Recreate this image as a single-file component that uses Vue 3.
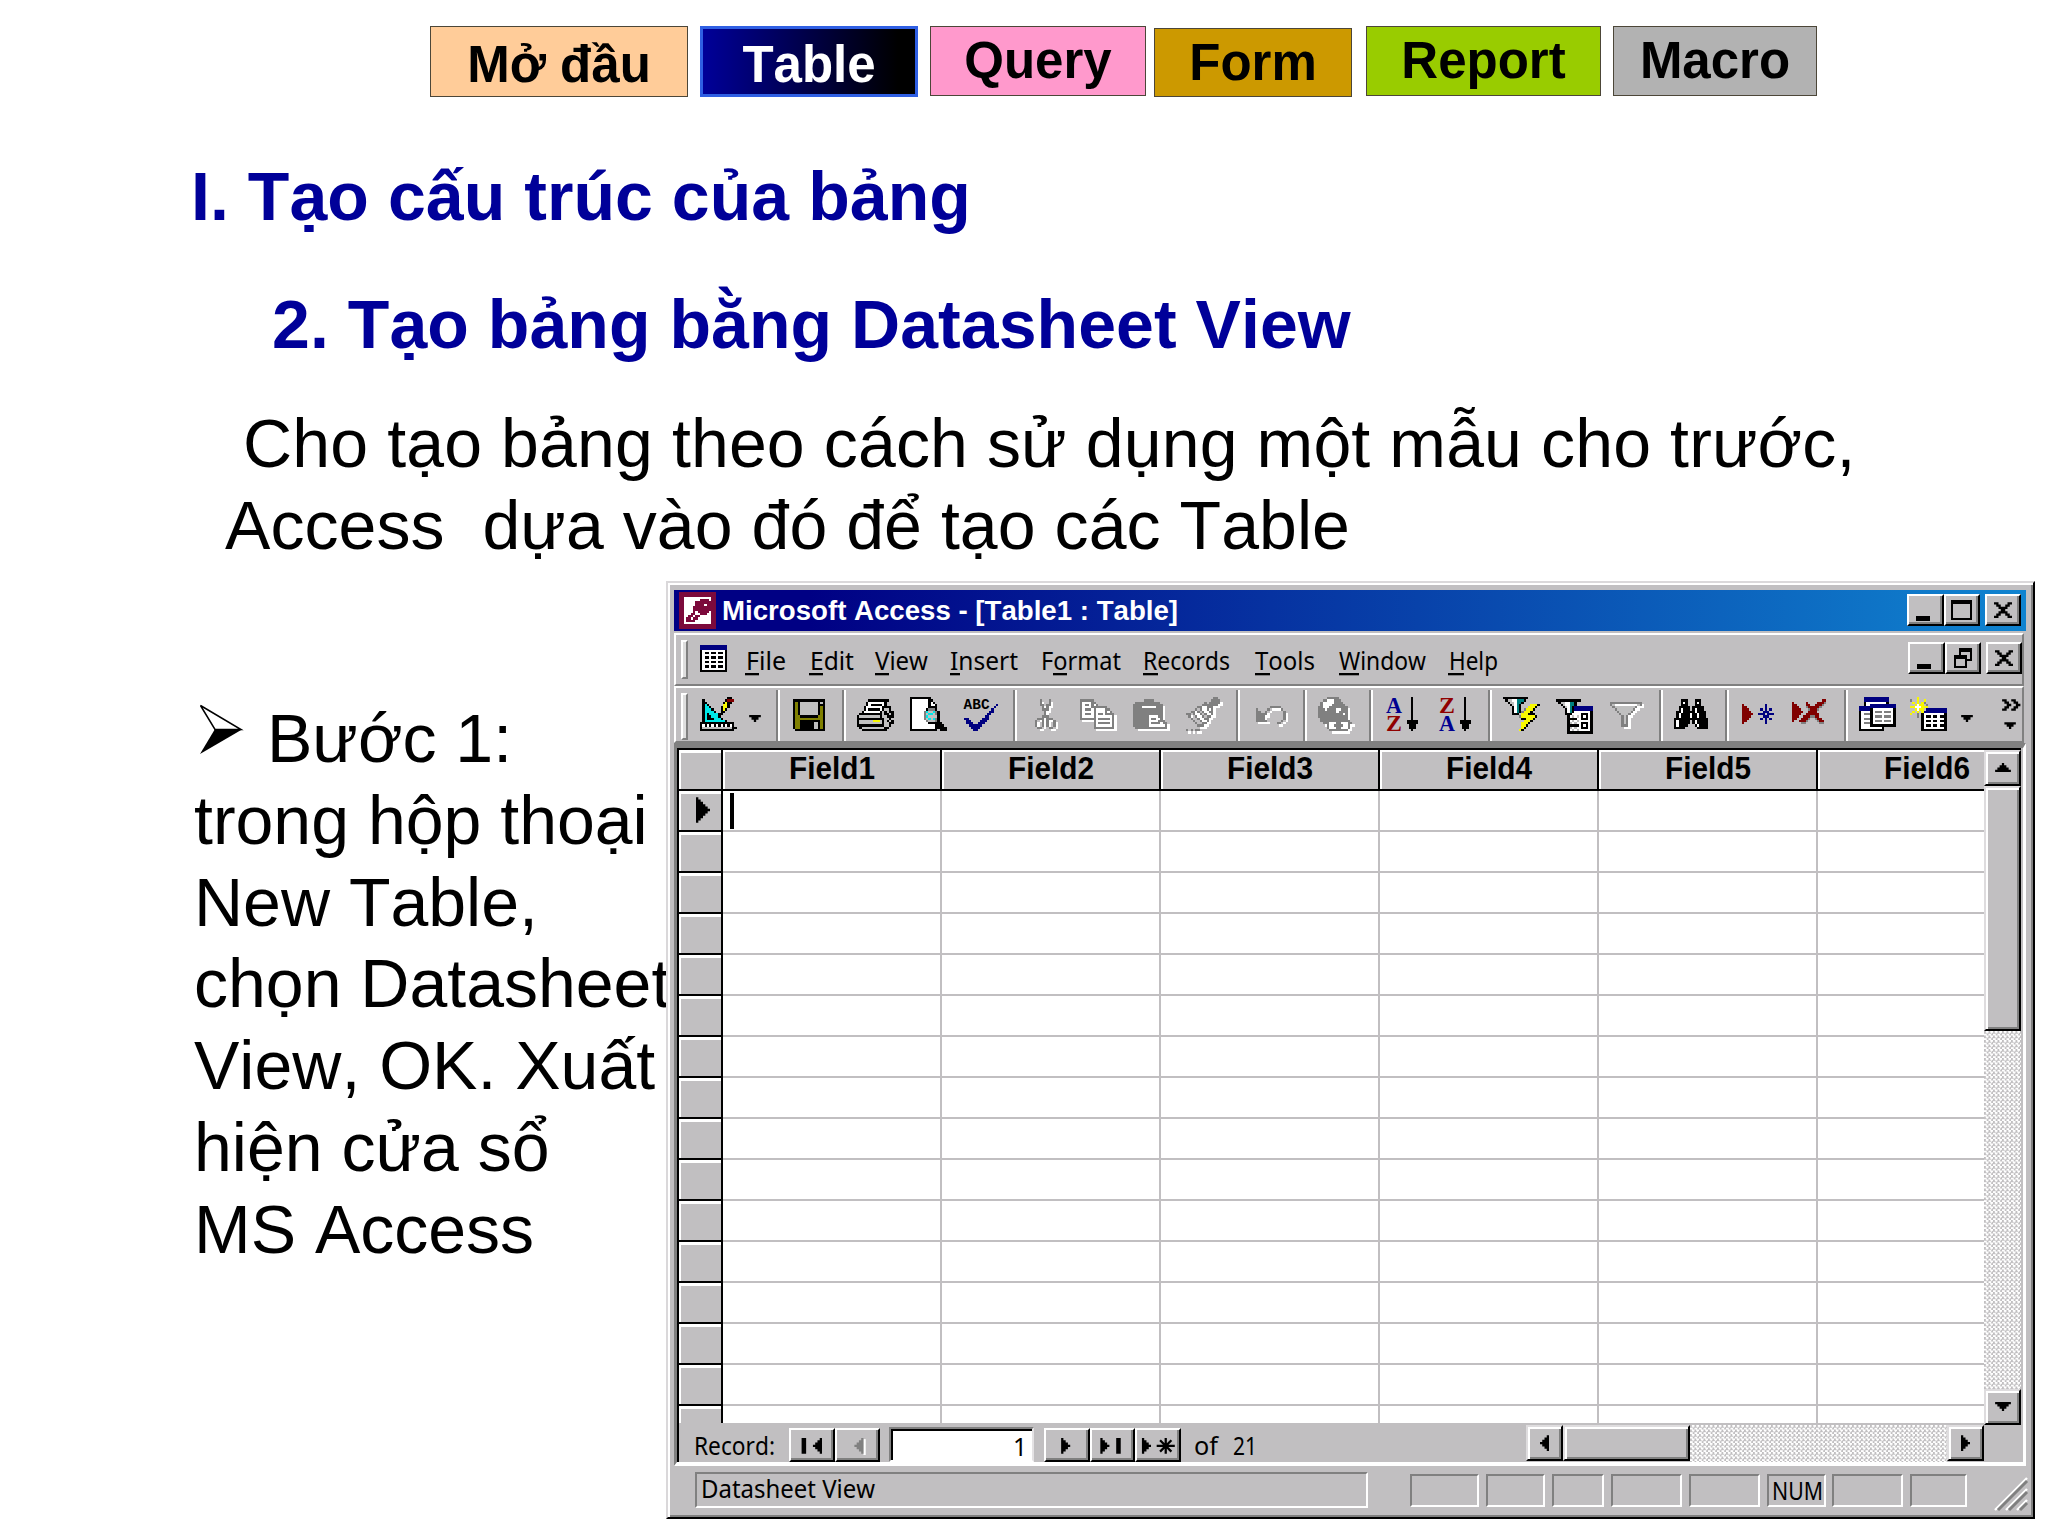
<template>
  <div class="slide">
    <nav class="tabs">
      <div v-for="tab in tabs" :key="tab.name" class="tab" :class="tab.name">{{ tab.label }}</div>
    </nav>

    <h1 class="chapter">I. Tạo cấu trúc của bảng</h1>
    <h2 class="section">2. Tạo bảng bằng Datasheet View</h2>
    <p class="intro">
      <span class="first">Cho tạo bảng theo cách sử dụng một mẫu cho trước,</span>
      <span>Access&nbsp; dựa vào đó để tạo các Table</span>
    </p>

    <div class="content">
      <div class="steps">
        <div class="step-head">
          <svg class="bullet" width="73" height="82" viewBox="0 0 73 82">
            <path d="M6.5 7.5 L47 31.5 L21 31.5 Z" fill="#fff" stroke="#000" stroke-width="1.5" />
            <path d="M6 56 L21 31 L48 31.5 Z" fill="#000" />
          </svg>
          <span>Bước 1:</span>
        </div>
        <div v-for="line in stepLines" :key="line">{{ line }}</div>
      </div>

      <div class="window">
        <!-- 标题栏 -->
        <div class="title-bar">
          <svg class="app-icon" viewBox="0 0 16 16">
            <rect v-for="(p, i) in pixels('key')" :key="i" :x="p.x" :y="p.y" :width="p.w" height="1" :fill="p.fill" />
          </svg>
          <svg class="title-text" width="470" height="41">
            <text x="0" y="29.5" textLength="456" lengthAdjust="spacingAndGlyphs">Microsoft Access - [Table1 : Table]</text>
          </svg>
          <div class="win-buttons">
            <div class="btn"><i class="min"></i></div>
            <div class="btn"><i class="max"></i></div>
            <div class="btn close">
              <svg viewBox="0 0 8 7"><path d="M0 0h2v1h1v1h2v-1h1v-1h2v1h-1v1h-1v1h-1v1h1v1h1v1h1v1h-2v-1h-1v-1h-2v1h-1v1h-2v-1h1v-1h1v-1h1v-1h-1v-1h-1v-1h-1z" /></svg>
            </div>
          </div>
        </div>

        <!-- 菜单栏 -->
        <div class="bar menu-bar">
          <div class="grip"></div>
          <svg class="doc-icon" viewBox="0 0 12 12">
            <rect width="12" height="12" fill="#000" />
            <rect width="12" height="2" fill="#000080" />
            <rect x="1" y="2" width="10" height="9" fill="#fff" />
            <path d="M2 3.5h8M2 5.5h8M2 7.5h8M2 9.5h8" stroke="#000" stroke-dasharray="2 1" />
          </svg>
          <div v-for="m in menus" :key="m.label" class="menu" :style="{ width: m.slot + 'px' }">
            <svg :width="m.len + 4" height="41">
              <text x="0" y="25" :textLength="m.len" lengthAdjust="spacingAndGlyphs">{{ m.label }}</text>
              <rect :x="m.ux" y="28" :width="m.uw" height="2.3" />
            </svg>
          </div>
          <div class="win-buttons">
            <div class="btn"><i class="min"></i></div>
            <div class="btn">
              <svg class="restore" viewBox="0 0 8 9" shape-rendering="crispEdges">
                <path d="M2 0h6v6h-2v3h-6v-6h2z" fill="#000" />
                <path d="M3 2h4v3h-1v-2h-3zM1 5h4v3h-4z" fill="#c1bfc1" />
              </svg>
            </div>
            <div class="btn close">
              <svg viewBox="0 0 8 7"><path d="M0 0h2v1h1v1h2v-1h1v-1h2v1h-1v1h-1v1h-1v1h1v1h1v1h1v1h-2v-1h-1v-1h-2v1h-1v1h-2v-1h1v-1h1v-1h1v-1h-1v-1h-1v-1h-1z" /></svg>
            </div>
          </div>
        </div>

        <!-- 工具栏 -->
        <div class="bar tool-bar">
          <div class="grip"></div>
          <div v-for="(t, n) in tools" :key="n" class="tool" :style="{ width: t.slot + 'px' }">
            <div v-if="t.icon === 'sep'" class="sep"></div>
            <svg v-else-if="t.icon === 'arrow'" class="drop" viewBox="0 0 5 3"><path d="M0 0h5v1h-1v1h-1v1h-1v-1h-1v-1h-1z" /></svg>
            <svg v-else class="icon" viewBox="0 0 16 16">
              <template v-if="t.disabled">
                <rect v-for="(p, i) in pixels(t.icon)" :key="'s' + i" :x="p.x + 1" :y="p.y + 1" :width="p.w" height="1" fill="#fff" />
              </template>
              <rect v-for="(p, i) in pixels(t.icon)" :key="i" :x="p.x" :y="p.y" :width="p.w" height="1" :fill="p.fill" />
              <text v-if="t.icon === 'spell'" class="abc" x="-0.2" y="5.3" textLength="11.4" lengthAdjust="spacingAndGlyphs">ABC</text>
              <template v-if="t.letters">
                <text class="sort" :class="'letter-' + t.letters[0]" x="0" y="6.9" textLength="7" lengthAdjust="spacingAndGlyphs">{{ t.letters[0] }}</text>
                <text class="sort" :class="'letter-' + t.letters[1]" x="0" y="15" textLength="7" lengthAdjust="spacingAndGlyphs">{{ t.letters[1] }}</text>
              </template>
            </svg>
          </div>
          <svg class="more" viewBox="0 0 8 14">
            <path d="M0 1h2v1h1v1h1v1h-1v1h-1v1h-2v-1h1v-1h1v-1h-1v-1h-1zM4 1h2v1h1v1h1v1h-1v1h-1v1h-2v-1h1v-1h1v-1h-1v-1h-1z" />
            <path d="M1 11h5v1h-1v1h-1v1h-1v-1h-1v-1h-1z" />
          </svg>
        </div>

        <!-- 数据表 -->
        <div class="frame">
          <div class="upper">
            <div class="sheet">
              <div class="row head">
                <div class="selector"></div>
                <div v-for="c in 6" :key="c" class="col-head">
                  <svg width="90" height="37">
                    <text x="2" y="28.5" textLength="86" lengthAdjust="spacingAndGlyphs">Field{{ c }}</text>
                  </svg>
                </div>
              </div>
              <div v-for="r in 16" :key="r" class="row">
                <div class="selector">
                  <svg v-if="r === 1" class="current" viewBox="0 0 6 11"><path d="M0 0h1v1h1v1h1v1h1v1h1v1h1v1h-1v1h-1v1h-1v1h-1v1h-1v1h-1z" /></svg>
                </div>
                <div v-for="c in 6" :key="c" class="cell">
                  <i v-if="r === 1 && c === 1" class="caret"></i>
                </div>
              </div>
            </div>
            <div class="vscroll">
              <div class="sbtn"><svg width="16" height="9" viewBox="0 0 7 4"><path d="M3 0h1v1h1v1h1v1h1v1h-7v-1h1v-1h1v-1h1z" /></svg></div>
              <div class="sbtn vthumb"></div>
              <div class="dither"></div>
              <div class="sbtn"><svg width="16" height="9" viewBox="0 0 7 4"><path d="M0 0h7v1h-1v1h-1v1h-1v1h-1v-1h-1v-1h-1v-1h-1z" /></svg></div>
            </div>
          </div>

          <div class="record-bar">
            <svg class="rec-label" width="95" height="38">
              <text x="0" y="32" textLength="81" lengthAdjust="spacingAndGlyphs">Record:</text>
            </svg>
            <div class="nav-btn"><svg viewBox="0 0 20 15"><path d="M1 0h2v7h-2zM10 0v7h-1v-1h-1v-1h-1v-1h-1v-1h1v-1h1v-1h1v-1z" /></svg></div>
            <div class="nav-btn"><svg viewBox="0 0 20 15"><path d="M8 0.5h1v7h-1z" fill="#fff" /><path d="M8 0v7h-1v-1h-1v-1h-1v-1h-1v-1h1v-1h1v-1h1v-1z" fill="#808080" /></svg></div>
            <div class="rec-input">1</div>
            <div class="nav-btn"><svg viewBox="0 0 20 15"><path d="M3 0h1v1h1v1h1v1h1v1h-1v1h-1v1h-1v1h-1z" /></svg></div>
            <div class="nav-btn"><svg viewBox="0 0 20 15"><path d="M0 0h1v1h1v1h1v1h1v1h-1v1h-1v1h-1v1h-1zM7 0h2v7h-2z" /></svg></div>
            <div class="nav-btn"><svg viewBox="0 0 20 15"><path d="M-1.5 0h1v1h1v1h1v1h1v1h-1v1h-1v1h-1v1h-1z" /><path d="M5 3.5h8M9 0v7M6.5 1l5 5M11.5 1l-5 5" stroke="#000" /></svg></div>
            <svg class="rec-total" width="80" height="38">
              <text x="0" y="32" textLength="24" lengthAdjust="spacingAndGlyphs">of</text>
              <text x="39" y="32" textLength="24" lengthAdjust="spacingAndGlyphs">21</text>
            </svg>
            <div class="hscroll">
              <div class="sbtn"><svg width="9" height="16" viewBox="0 0 4 7"><path d="M4 0v7h-1v-1h-1v-1h-1v-1h-1v-1h1v-1h1v-1h1v-1z" /></svg></div>
              <div class="sbtn hthumb"></div>
              <div class="dither"></div>
              <div class="sbtn"><svg width="9" height="16" viewBox="0 0 4 7"><path d="M0 0h1v1h1v1h1v1h1v1h-1v1h-1v1h-1v1h-1z" /></svg></div>
            </div>
          </div>
        </div>

        <!-- 状态栏 -->
        <div class="status-bar">
          <div class="pane main-pane">
            <svg width="190" height="33">
              <text x="4" y="24" textLength="174" lengthAdjust="spacingAndGlyphs">Datasheet View</text>
            </svg>
          </div>
          <div class="panes">
            <div v-for="(p, i) in panes" :key="i" class="pane" :style="{ width: p.w + 'px', marginRight: p.gap + 'px' }">
              <svg v-if="p.text" width="58" height="30">
                <text x="3" y="24" textLength="51" lengthAdjust="spacingAndGlyphs">{{ p.text }}</text>
              </svg>
            </div>
          </div>
          <svg class="size-grip" width="34" height="34" viewBox="0 0 34 34">
            <path d="M1 33L33 1M12 33L33 12M23 33L33 23" stroke="#fff" stroke-width="2.4" />
            <path d="M4 33L33 4M15 33L33 15M26 33L33 26" stroke="#808080" stroke-width="3" />
          </svg>
        </div>
      </div>
    </div>
  </div>
</template>

<script setup>
const tabs = [
  { name: "start", label: "Mở đầu" },
  { name: "table", label: "Table" },
  { name: "query", label: "Query" },
  { name: "form", label: "Form" },
  { name: "report", label: "Report" },
  { name: "macro", label: "Macro" },
];

const stepLines = ["trong hộp thoại", "New Table,", "chọn Datasheet", "View, OK. Xuất", "hiện cửa sổ", "MS Access"];

// slot: 占位宽度, len: 文字宽度, ux/uw: 快捷键下划线
const menus = [
  { label: "File", slot: 64, len: 40, ux: -1, uw: 14 },
  { label: "Edit", slot: 65, len: 44, ux: -1, uw: 14 },
  { label: "View", slot: 75, len: 53, ux: 0, uw: 14 },
  { label: "Insert", slot: 91, len: 68, ux: 0, uw: 10 },
  { label: "Format", slot: 102, len: 80, ux: 12, uw: 14 },
  { label: "Records", slot: 112, len: 87, ux: 0, uw: 15 },
  { label: "Tools", slot: 84, len: 60, ux: 0, uw: 15 },
  { label: "Window", slot: 110, len: 87, ux: 0, uw: 20 },
  { label: "Help", slot: 60, len: 49, ux: -1, uw: 16 },
];

const tools = [
  { icon: "design", slot: 49 },
  { icon: "arrow", slot: 27 },
  { icon: "sep", slot: 17 },
  { icon: "save", slot: 49 },
  { icon: "sep", slot: 15 },
  { icon: "print", slot: 53 },
  { icon: "preview", slot: 54 },
  { icon: "spell", slot: 49 },
  { icon: "sep", slot: 22 },
  { icon: "cut", slot: 45, disabled: true },
  { icon: "copy", slot: 53, disabled: true },
  { icon: "paste", slot: 53, disabled: true },
  { icon: "painter", slot: 50, disabled: true },
  { icon: "sep", slot: 20 },
  { icon: "undo", slot: 47, disabled: true },
  { icon: "sep", slot: 15 },
  { icon: "link", slot: 51, disabled: true },
  { icon: "sep", slot: 17 },
  { icon: "sort", slot: 53, letters: "AZ" },
  { icon: "sort", slot: 49, letters: "ZA" },
  { icon: "sep", slot: 15 },
  { icon: "filterSelection", slot: 53 },
  { icon: "filterForm", slot: 54 },
  { icon: "filter", slot: 49, disabled: true },
  { icon: "sep", slot: 15 },
  { icon: "find", slot: 51 },
  { icon: "sep", slot: 17 },
  { icon: "newRecord", slot: 50 },
  { icon: "deleteRecord", slot: 52 },
  { icon: "sep", slot: 15 },
  { icon: "database", slot: 51 },
  { icon: "newObject", slot: 51 },
  { icon: "arrow", slot: 41 },
];

const panes = [
  { w: 69, gap: 7 },
  { w: 59, gap: 7 },
  { w: 52, gap: 7 },
  { w: 71, gap: 7 },
  { w: 71, gap: 7 },
  { w: 59, gap: 6, text: "NUM" },
  { w: 71, gap: 7 },
  { w: 57, gap: 0 },
];

const palette = {
  k: "#000",
  w: "#fff",
  g: "#808080",
  s: "#c0c0c0",
  b: "#000080",
  c: "#00e8e8",
  y: "#f8f800",
  o: "#808000",
  r: "#800000",
  m: "#7c0a3c",
  t: "#008080",
};

// 16x16 像素图标
const icons = {
  key: [
    "mmmmmmmmmmmmmmmm",
    "mmmmmmmmmmmmmmmm",
    "mmwwwwwwwwwwwwmm",
    "mmwwwwwwwmmmmwmm",
    "mmwwwwwmmmmmmmmm",
    "mmwwwwwmmmmwmmmm",
    "mmwwwwmmmmmmmmmm",
    "mmwwwwmmmmmmmmmm",
    "mmwwwwmwmmmmmwmm",
    "mmwwwmmwwmmmwwmm",
    "mmwwmmwmmwwwwwmm",
    "mmwmmwmmwwwwwwmm",
    "mmwmmmmwwwwwwwmm",
    "mmwwwwwwwwwwwwmm",
    "mmmmmmmmmmmmmmmm",
    "mmmmmmmmmmmmmmmm",
  ],
  design: [
    "............kk..",
    ".k.........krrr.",
    ".kk.......kykk..",
    ".kck......yyk...",
    ".kcck....kyyk...",
    ".kccck...kyk....",
    ".kcccck..kk.....",
    ".kckcccckk......",
    ".kckkccck.......",
    ".kckkkccck......",
    ".kccccccccck....",
    "kkkkkkkkkkkkkkk.",
    "kwkwkwkwkwkwkwk.",
    "kssssssssssssskk",
    "kkkkkkkkkkkkkkk.",
  ],
  save: [
    "",
    "kkkkkkkkkkkkkk",
    "kokssssssssksk",
    "koksssssssskkk",
    "koksssssssskok",
    "koksssssssskok",
    "koksssssssskok",
    "koksssssssskok",
    "kookkkkkkkkook",
    "kooooooooooook",
    "kookkkkkkkkkok",
    "kookkkkkksskok",
    "kookkkkkksskok",
    "kookkkkkksskok",
    ".kkkkkkkkkkkkk",
  ],
  print: [
    "",
    ".....kkkkkkkkk..",
    "....kwwwwwwwk...",
    "....kwkkkkkwk...",
    "...kwwwwwwwkkkk.",
    "...kwkkkkkwkssk.",
    "..kwwwwwwwkskskk",
    ".kkkkkkkkkkskksk",
    "ksssssssssksskkk",
    "kkkkkkkkkkkkssk.",
    "kssssssyyysksksk",
    "kssssssssssksskk",
    "kkkkkkkkkkkkssk.",
    ".ksssssssssskk..",
    "..kkkkkkkkkkk...",
  ],
  preview: [
    "kkkkkkkkk.......",
    "kwwwwwwwkk......",
    "kwwwwwwwkwk.....",
    "kwwwwwwwkwwk....",
    "kwwwwwwwkkkk....",
    "kwwwwwwkgggk....",
    "kwwwwwgcsscgk...",
    "kwwwwwgsccsgk...",
    "kwwwwwgcssssk...",
    "kwwwwwgscscgk...",
    "kwwwwwwgsssgk...",
    "kwwwwwwwkkkkkk..",
    "kwwwwwwwwwwkkkk.",
    "kwwwwwwwwwwkkkkk",
    "kkkkkkkkkkkk.kkk",
  ],
  spell: [
    "",
    "",
    "",
    "..............b.",
    ".............b..",
    "............b...",
    "...........bb...",
    "..........bb....",
    ".........bb.....",
    "bb......bbb.....",
    ".bb....bbb......",
    ".bbb..bbb.......",
    "..bbbbbb........",
    "...bbbb.........",
    "....bb..........",
  ],
  cut: [
    "",
    "..g...g..",
    "..g...g..",
    "..gg.gg..",
    "...g.g...",
    "...ggg...",
    "....g....",
    "....g....",
    "...ggg...",
    ".ggg.ggg.",
    "g..g.g..g",
    "g..g.g..g",
    "g..g.g..g",
    ".gg...gg.",
  ],
  copy: [
    "",
    "gggggg.........",
    "gwwwwgg........",
    "gwggwgwg.......",
    "gwwwwggggggg...",
    "gwgggwgwwwwgg..",
    "gwwwwwgwwwwgwg.",
    "gwgggwgwggwgggg",
    "gwwwwwgwwwwwwwg",
    "gggggggwgggggwg",
    "......gwwwwwwwg",
    "......gwgggggwg",
    "......gwwwwwwwg",
    "......ggggggggg",
  ],
  paste: [
    "",
    ".....gggg......",
    ".ggggggggggg...",
    "ggggggggggggg..",
    "ggggwwwwwwggg..",
    "ggggggggggggg..",
    "ggggggggggggg..",
    "ggggggggggggg..",
    "gggggggwwwwgg..",
    "gggggggwggwwg..",
    "gggggggwwwwggg.",
    "gggggggwggggwgg",
    "gggggggwwwwwwwg",
    ".gggggggggggggg",
  ],
  painter: [
    "............gg..",
    "...........gggg.",
    "........g.ggggg.",
    ".......ggggggg..",
    ".....ggwwggg....",
    "....g.gwwgwg....",
    "..ggwg.gwwgg....",
    "gg.gwwg.gwwg....",
    ".g..gwwg.gg.....",
    "..g..gwwgg......",
    "...g..gwwg......",
    "....g..gg.......",
    ".....ggg........",
    "................",
    "g.g.gg..........",
  ],
  undo: [
    "",
    "",
    "",
    "",
    "......ggggg...",
    "g....g.....g..",
    "gg..g.......g.",
    "ggggg.......g.",
    "gggg........g.",
    "gggg........g.",
    "ggggg......g..",
    ".........gg...",
  ],
  link: [
    "....ggggg......",
    "..ggwwwggg.....",
    ".gwwwwwgggg....",
    ".gwwwwgggggg...",
    "ggwwwgggggggg..",
    "gggwggggwwggg..",
    "ggggggggwgggg..",
    "gggggggggggwg..",
    "ggggggggggggg..",
    ".gggggggggggg..",
    ".ggggggggggggg.",
    "..gggwwwggwwwgg",
    "....gwwggggwwg.",
    "....gwwwggwwwg.",
    ".....gggggggg..",
  ],
  sort: [
    "...........k....",
    "...........k....",
    "...........k....",
    "...........k....",
    "...........k....",
    "...........k....",
    "...........k....",
    "...........k....",
    "...........k....",
    "...........k....",
    ".........kkkkk..",
    ".........kkkkk..",
    "..........kkk...",
    "..........kkk...",
    "...........k....",
  ],
  filterSelection: [
    "kkkkkkkkkkk.....",
    ".ksswwtttk......",
    "..ksswttk.......",
    "...kswtk....yyyk",
    "....kwtk...yyyk.",
    "....kwtk.gyyyk..",
    "....kwtkgyyyk...",
    "....kkk.yyykkk..",
    ".......gyyyyyyk.",
    "........kkyyyk..",
    ".........yyyk...",
    "........yyyk....",
    "........yyk.....",
    "........yk......",
    ".......yk.......",
  ],
  filterForm: [
    "",
    "kkkkkkkkkkk.....",
    ".ksswwttk.......",
    "..kswwttk.......",
    "...kswtkbbbbbbbb",
    "....kwtkbbbbbbbb",
    "....kwtkwwwwwwwk",
    "....kkkwwwwkkkwk",
    ".....kwswswkwkwk",
    ".....kkkkwwkkkwk",
    ".....kwswswwwwwk",
    ".....kswswwkkkwk",
    ".....kkkkkwkwkwk",
    ".....kswswwkkkwk",
    ".....kwswswwwwwk",
    ".....kkkkkkkkkkk",
  ],
  filter: [
    "",
    "",
    "gggggggggggggg.",
    "gswwwwwwwwwwsg.",
    ".gsssssssssg...",
    "..gsssssssg....",
    "...gsssssg.....",
    "....gsssg......",
    ".....gsg.......",
    ".....gsg.......",
    ".....gsg.......",
    ".....gsg.......",
    ".....ggg.......",
  ],
  find: [
    "",
    "...kkk...kkk...",
    "...kwk...kwk...",
    "...kkk...kkk...",
    "..kkkkk.kkkkk..",
    "..kwkkk.kwkkk..",
    ".kkwkkkkkwkkkk.",
    ".kwkkkkwkkwkkk.",
    ".kwkkkkwkkwkkk.",
    "kkkkkkkkkkkkkkk",
    "kwkkkkk.kwkkkkk",
    "kwkkkkk.kwkkkkk",
    "kwkkkk...kwkkkk",
    "kkkkk.....kkkkk",
  ],
  newRecord: [
    "",
    "",
    "",
    "r.........b....",
    "rr........b....",
    "rrr.....b.b.b..",
    "rrrr.....bbb...",
    "rrrrr..bbb.bbb.",
    "rrrr.....bbb...",
    "rrr.....b.b.b..",
    "rr........b....",
    "r.........b....",
  ],
  deleteRecord: [
    "",
    ".............rr.",
    "r.....r....rrrg.",
    "rr....rr..rrrg..",
    "rrr...grrrrrg...",
    "rrrr...grrrg....",
    "rrrrr..rrrr.....",
    "rrrr..rrrrrr....",
    "rrr..rrrggrr....",
    "rr..rrrg..grr...",
    "r..rrrg....grr..",
    "....gg......gg..",
  ],
  database: [
    "..bbbbbbbbbbb...",
    "..bbbbbbbbbbb...",
    "..kwwwwwwwwwk...",
    "..kwwbbbbbbbbbbb",
    "bbbbbbbbbbbbbbbb",
    "bbbbbkwwwwwwwwwk",
    "kwwwwkwgggwgggwk",
    "kwgggkwwwwwwwwwk",
    "kwwwwkwgggwgggwk",
    "kwgggkwwwwwwwwwk",
    "kwwwwkwgggwgggwk",
    "kwgggkwwwwwwwwwk",
    "kwwwwkkkkkkkkkkk",
    "kwwwwwwwwwk.....",
    "kkkkkkkkkkk.....",
  ],
  newObject: [
    "...y............",
    "g..y..y.........",
    ".y.y.yg.........",
    "..ywyy.g........",
    "yywwwyyy........",
    "..ywyy.bbbbbbbbb",
    ".y.y.ybbbbbbbbbb",
    "y..g.kwwwwwwwwwk",
    "...g.kwkkwkkwkkk",
    ".....kwwwwwwwwwk",
    ".....kwkkwkkwkkk",
    ".....kwwwwwwwwwk",
    ".....kwkkwkkwkkk",
    ".....kwwwwwwwwwk",
    ".....kkkkkkkkkkk",
  ],
};

// 同一行相同颜色合并成一个矩形
function pixels(name) {
  const out = [];
  icons[name].forEach((row, y) => {
    let x = 0;
    while (x < row.length) {
      const ch = row[x];
      let end = x + 1;
      while (end < row.length && row[end] === ch) end++;
      if (ch !== ".") out.push({ x, y, w: end - x, fill: palette[ch] });
      x = end;
    }
  });
  return out;
}
</script>

<style>
body {
  background: #fff;
}
</style>

<style scoped>
.slide {
  width: 2048px;
  height: 1536px;
  overflow: hidden;
  background: #fff;
  color: #000;
  font-family: "Liberation Sans", Arial, sans-serif;
  font-size: 68px;
  line-height: 81.9px;
  font-kerning: none;
  white-space: nowrap;
}

svg {
  display: block;
  flex: none;
  overflow: visible;
}

/* 顶部标签 */
.tabs {
  display: flex;
  align-items: flex-start;
  height: 129px;
  padding: 26px 0 0 430px;
  box-sizing: border-box;
}

.tab {
  box-sizing: border-box;
  height: 70px;
  border: 1px solid #4c4638;
  font-size: 51px;
  font-weight: bold;
  line-height: 68px;
  text-align: center;
}

.start {
  width: 258px;
  height: 71px;
  line-height: 76px;
  background: #ffcc99;
}

.table {
  width: 218px;
  height: 71px;
  margin-left: 12px;
  border: 3px solid #2f5fe3;
  line-height: 72px;
  color: #fff;
  background: linear-gradient(90deg, #000099, #000 92%);
}

.query {
  width: 216px;
  margin-left: 12px;
  background: #ff99cc;
}

.form {
  width: 198px;
  height: 69px;
  margin: 28px 0 0 8px;
  margin-top: 2px;
  background: #cc9900;
}

.report {
  width: 235px;
  margin-left: 14px;
  background: #99cc00;
}

.macro {
  width: 204px;
  margin-left: 12px;
  background: #b2b2b2;
}

.chapter,
.section {
  margin: 0;
  font-size: 68px;
  letter-spacing: 0.06px;
  color: #000099;
}

.chapter {
  padding: 27px 0 0 191px;
}

.section {
  padding: 46px 0 0 272px;
}

.intro {
  display: flex;
  flex-direction: column;
  margin: 0;
  padding: 37px 0 0 225px;
  letter-spacing: 0.06px;
}

.first {
  padding-left: 18px;
  letter-spacing: 0.13px;
}

.content {
  display: flex;
  margin-top: 14px;
}

.steps {
  width: 472px;
  flex: none;
  padding: 117px 0 0 194px;
}

.step-head {
  display: flex;
}

/* Access 窗口 */
.window {
  display: flex;
  flex-direction: column;
  box-sizing: border-box;
  width: 1369px;
  height: 938px;
  flex: none;
  padding: 7px 7px 0 6px;
  border: 2px solid;
  border-color: #dad8da #000 #000 #dad8da;
  box-shadow: inset 2px 2px #fff, inset -2px -2px #808080;
  background: #c1bfc1;
  font-size: 25px;
  line-height: 1;
}

.window text {
  font-family: "Noto Sans", sans-serif;
  font-size: 24.5px;
  fill: #000;
}

.title-bar {
  display: flex;
  align-items: center;
  height: 41px;
  padding: 0 5px;
  background: linear-gradient(90deg, #000084 10%, #1084d0);
}

.app-icon {
  width: 37px;
  height: 37px;
  shape-rendering: crispEdges;
}

.title-text {
  margin-left: 6px;
}

.window .title-text text {
  font-family: "Liberation Sans", sans-serif;
  font-size: 27px;
  font-weight: bold;
  fill: #fff;
}

.win-buttons {
  display: flex;
  margin-left: auto;
}

.btn {
  display: flex;
  align-items: center;
  justify-content: center;
  box-sizing: border-box;
  width: 36.5px;
  height: 32px;
  border: 2px solid;
  border-color: #fff #000 #000 #fff;
  box-shadow: inset -2px -2px #808080;
  background: #c1bfc1;
}

.btn.close {
  margin-left: 4.5px;
}

.btn.close svg {
  width: 18px;
  height: 16px;
}

.min {
  width: 14px;
  height: 5px;
  margin-top: 17px;
  margin-right: 5px;
  background: #000;
}

.max {
  box-sizing: border-box;
  width: 21px;
  height: 20px;
  border: 2px solid #000;
  border-top-width: 4px;
}

.restore {
  width: 18px;
  height: 20px;
}

.bar {
  display: flex;
  align-items: flex-start;
  box-sizing: border-box;
  width: 1350px;
  border: 2px solid;
  border-color: #fff #808080 #808080 #fff;
}

.menu-bar {
  height: 53px;
  margin-top: 2px;
}

.tool-bar {
  height: 58px;
}

.grip {
  box-sizing: border-box;
  width: 7px;
  height: 39px;
  margin: 5px 12px 0 5px;
  border: 2px solid;
  border-color: #fff #808080 #808080 #fff;
  background: #dedede;
}

.tool-bar .grip {
  height: 47px;
}

.doc-icon {
  width: 27px;
  height: 27px;
  margin: 10px 19px 0 0;
  shape-rendering: crispEdges;
}

.menu {
  flex: none;
  padding-top: 10px;
}

.menu-bar .win-buttons {
  margin: 7px 0 0 auto;
}

.tool {
  flex: none;
}

.sep {
  width: 2px;
  height: 51px;
  margin-top: 2px;
  border-left: 2px solid #808080;
  background: #fff;
}

.icon {
  width: 36.5px;
  height: 36.5px;
  margin-top: 9px;
  shape-rendering: crispEdges;
}

.window .icon .abc {
  font-family: "Liberation Mono", monospace;
  font-size: 6.8px;
  font-weight: bold;
}

.window .icon .sort {
  font-family: "Liberation Serif", serif;
  font-size: 10.5px;
  font-weight: bold;
}

.window .icon .letter-A {
  fill: #000090;
}

.window .icon .letter-Z {
  fill: #900000;
}

.drop {
  width: 12px;
  height: 7px;
  margin-top: 27px;
}

.more {
  width: 18.5px;
  height: 32px;
  margin-top: 9px;
}

.frame {
  box-sizing: border-box;
  width: 1352px;
  height: 723px;
  border: solid;
  border-width: 5px 3px 4px 3px;
  border-color: #808080 #fff #fff #808080;
  padding: 2px 2px 0 2px;
  background: linear-gradient(#000, #000) 0 0 / 2px 100% no-repeat, linear-gradient(#000, #000) 0 0 / 1344px 2px no-repeat;
}

.upper {
  display: flex;
  height: 673px;
}

.sheet {
  width: 1305px;
  flex: none;
  overflow: hidden;
  background: #fff;
}

.row {
  display: flex;
  height: 41.05px;
}

.selector,
.col-head,
.cell {
  flex: none;
  box-sizing: border-box;
}

.selector {
  width: 44px;
  border: solid #000;
  border-width: 0 2px 2px 0;
  box-shadow: inset 2px 3px #fff;
  background: #c1bfc1;
}

.col-head {
  display: flex;
  justify-content: center;
  width: 219px;
  border: solid #000;
  border-width: 0 2px 2px 0;
  box-shadow: inset 2px 2px #fff;
  background: #c1bfc1;
}

.window .col-head text {
  font-family: "Liberation Sans", sans-serif;
  font-size: 31px;
  font-weight: bold;
}

.cell {
  width: 219px;
  border: solid #c1bfc1;
  border-width: 0 2px 2px 0;
}

.current {
  width: 14px;
  height: 26px;
  margin: 6px 0 0 17px;
}

.caret {
  display: block;
  width: 4px;
  height: 36px;
  margin: 2px 0 0 7px;
  background: #000;
}

.vscroll {
  display: flex;
  flex-direction: column;
  width: 37px;
  height: 675px;
}

.sbtn {
  display: flex;
  align-items: center;
  justify-content: center;
  box-sizing: border-box;
  width: 37px;
  height: 36px;
  flex: none;
  border: 2px solid;
  border-color: #dedcde #000 #000 #dedcde;
  box-shadow: inset 2px 2px #fff, inset -2px -2px #808080;
  background: #c1bfc1;
}

.vthumb {
  height: 245px;
}

.hthumb {
  width: 127px;
}

.dither {
  flex: 1;
  background: repeating-conic-gradient(#fff 0 25%, #c1bfc1 0 50%) 0 0 / 4.5px 4.5px;
}

.record-bar {
  display: flex;
  height: 39px;
  padding-left: 15px;
  background: #c1bfc1;
}

.nav-btn {
  box-sizing: border-box;
  width: 45.5px;
  height: 34px;
  margin-top: 5px;
  padding: 8px 0 0 9px;
  border: 2px solid;
  border-color: #fff #000 #000 #fff;
  box-shadow: inset -2px -2px #808080;
}

.nav-btn svg {
  width: 46px;
  height: 34px;
  margin-left: -1px;
}

.rec-input {
  box-sizing: border-box;
  width: 145px;
  height: 35px;
  margin: 4px 10px 0 9px;
  padding: 4px 5px 0 0;
  border: 2px solid;
  border-color: #808080 #e4e2e4 #fff #808080;
  box-shadow: inset 2px 2px #000;
  background: #fff;
  font-family: "Noto Sans", sans-serif;
  font-size: 24.5px;
  line-height: 28px;
  text-align: right;
}

.rec-total {
  margin-left: 13px;
}

.hscroll {
  display: flex;
  width: 458px;
  height: 37px;
  margin: 2px 37px 0 auto;
}

.status-bar {
  display: flex;
  height: 48px;
  padding: 6px 0 0 21px;
}

.pane {
  box-sizing: border-box;
  height: 33px;
  flex: none;
  border: 2px solid;
  border-color: #808080 #fff #fff #808080;
}

.main-pane {
  width: 673px;
  height: 36px;
}

.panes {
  display: flex;
  padding: 2px 0 0 42px;
}

.size-grip {
  margin: 5px 0 0 27px;
}
</style>
